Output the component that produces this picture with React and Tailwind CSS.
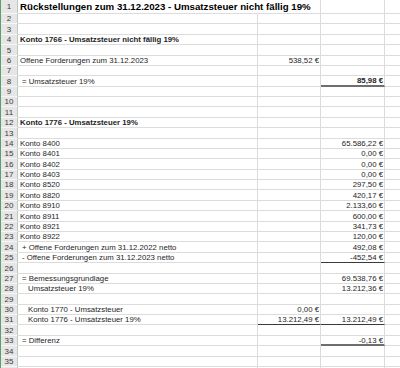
import React from "react";

// sparse sheet content, keyed by row number
const CELLS = {
    1: { a: "Rückstellungen zum 31.12.2023 - Umsatzsteuer nicht fällig 19%", title: true },
    4: { a: "Konto 1766 - Umsatzsteuer nicht fällig 19%", bold: true },
    6: { a: "Offene Forderungen zum 31.12.2023", b: "538,52 €" },
    8: { a: "= Umsatzsteuer 19%", indent: 1, c: "85,98 €", cBold: true, cLine: "thick" },
    12: { a: "Konto 1776 - Umsatzsteuer 19%", bold: true },
    14: { a: "Konto 8400", c: "65.586,22 €" },
    15: { a: "Konto 8401", c: "0,00 €" },
    16: { a: "Konto 8402", c: "0,00 €" },
    17: { a: "Konto 8403", c: "0,00 €" },
    18: { a: "Konto 8520", c: "297,50 €" },
    19: { a: "Konto 8820", c: "420,17 €" },
    20: { a: "Konto 8910", c: "2.133,60 €" },
    21: { a: "Konto 8911", c: "600,00 €" },
    22: { a: "Konto 8921", c: "341,73 €" },
    23: { a: "Konto 8922", c: "120,00 €" },
    24: { a: "+ Offene Forderungen zum 31.12.2022 netto", indent: 1, c: "492,08 €" },
    25: { a: "- Offene Forderungen zum 31.12.2023 netto", indent: 1, c: "-452,54 €", cLine: "thin" },
    27: { a: "= Bemessungsgrundlage", indent: 1, c: "69.538,76 €" },
    28: { a: "Umsatzsteuer 19%", indent: 2, c: "13.212,36 €" },
    30: { a: "Konto 1770 - Umsatzsteuer", indent: 2, b: "0,00 €" },
    31: { a: "Konto 1776 - Umsatzsteuer 19%", indent: 2, b: "13.212,49 €", c: "13.212,49 €", bLine: "thin", cLine: "thin" },
    33: { a: "= Differenz", indent: 1, c: "-0,13 €", cLine: "thick" },
};

const bottom = (i) => (i === 0 ? -1 : i === 1 ? 13 : Math.round(13 + (i - 1) * 10.38));

const heightClass = { 14: "h-[14px]", 10: "h-[10px]", 11: "h-[11px]" };
const indentClass = ["pl-[2px]", "pl-[4px]", "pl-[10px]"];
const lineClass = {
    grid: "border-b border-b-[#dcdcdc]",
    thin: "border-b border-b-[#3a3a3a]",
    thick: "border-b-2 border-b-[#6e6e6e]",
};

function Row({ n, label = true }) {
    const cell = CELLS[n] || {};
    const h = bottom(n) - bottom(n - 1);

    return (
        <div className={`flex ${heightClass[h]}`}>
            {/* row header */}
            <div className="w-[17px] shrink-0 flex items-center justify-center bg-[#e6e6e6] border-r border-r-[#bcc9bc] border-b border-b-[#f6f6f6] text-[8px] text-[#3a3a3a]">
                {label ? n : null}
            </div>

            {/* column A */}
            <div
                className={`w-[240px] shrink-0 flex items-center whitespace-nowrap ${lineClass.grid} ${
                    cell.title ? "" : "border-r border-r-[#dcdcdc]"
                } ${indentClass[cell.indent || 0]} ${
                    cell.title ? "text-[9.7px] font-bold text-black" : "text-[7.8px]"
                } ${cell.bold ? "font-bold" : ""}`}
            >
                {cell.a}
            </div>

            {/* column B */}
            <div
                className={`w-[63px] shrink-0 flex items-center justify-end pr-[1px] border-r border-r-[#dcdcdc] text-[7.8px] ${
                    lineClass[cell.bLine || "grid"]
                }`}
            >
                {cell.b}
            </div>

            {/* column C */}
            <div
                className={`w-[64px] shrink-0 flex items-center justify-end pr-[1px] border-r border-r-[#dcdcdc] text-[7.8px] ${
                    lineClass[cell.cLine || "grid"]
                } ${cell.cBold ? "font-bold" : ""}`}
            >
                {cell.c}
            </div>

            {/* column D */}
            <div className={`flex-1 ${lineClass.grid}`} />
        </div>
    );
}

export default function App() {
    const rows = Array.from({ length: 35 }, (_, i) => i + 1);

    return (
        <div
            className="w-[400px] h-[368px] overflow-hidden bg-white border-l border-l-[#5aa06e] text-[#1e1e1e] leading-[9px]"
            style={{ fontFamily: '"Liberation Sans", Arial, sans-serif' }}
        >
            {rows.map((n) => (
                <Row key={n} n={n} />
            ))}
            {/* next row, only its top edge shows */}
            <Row n={36} label={false} />
        </div>
    );
}
